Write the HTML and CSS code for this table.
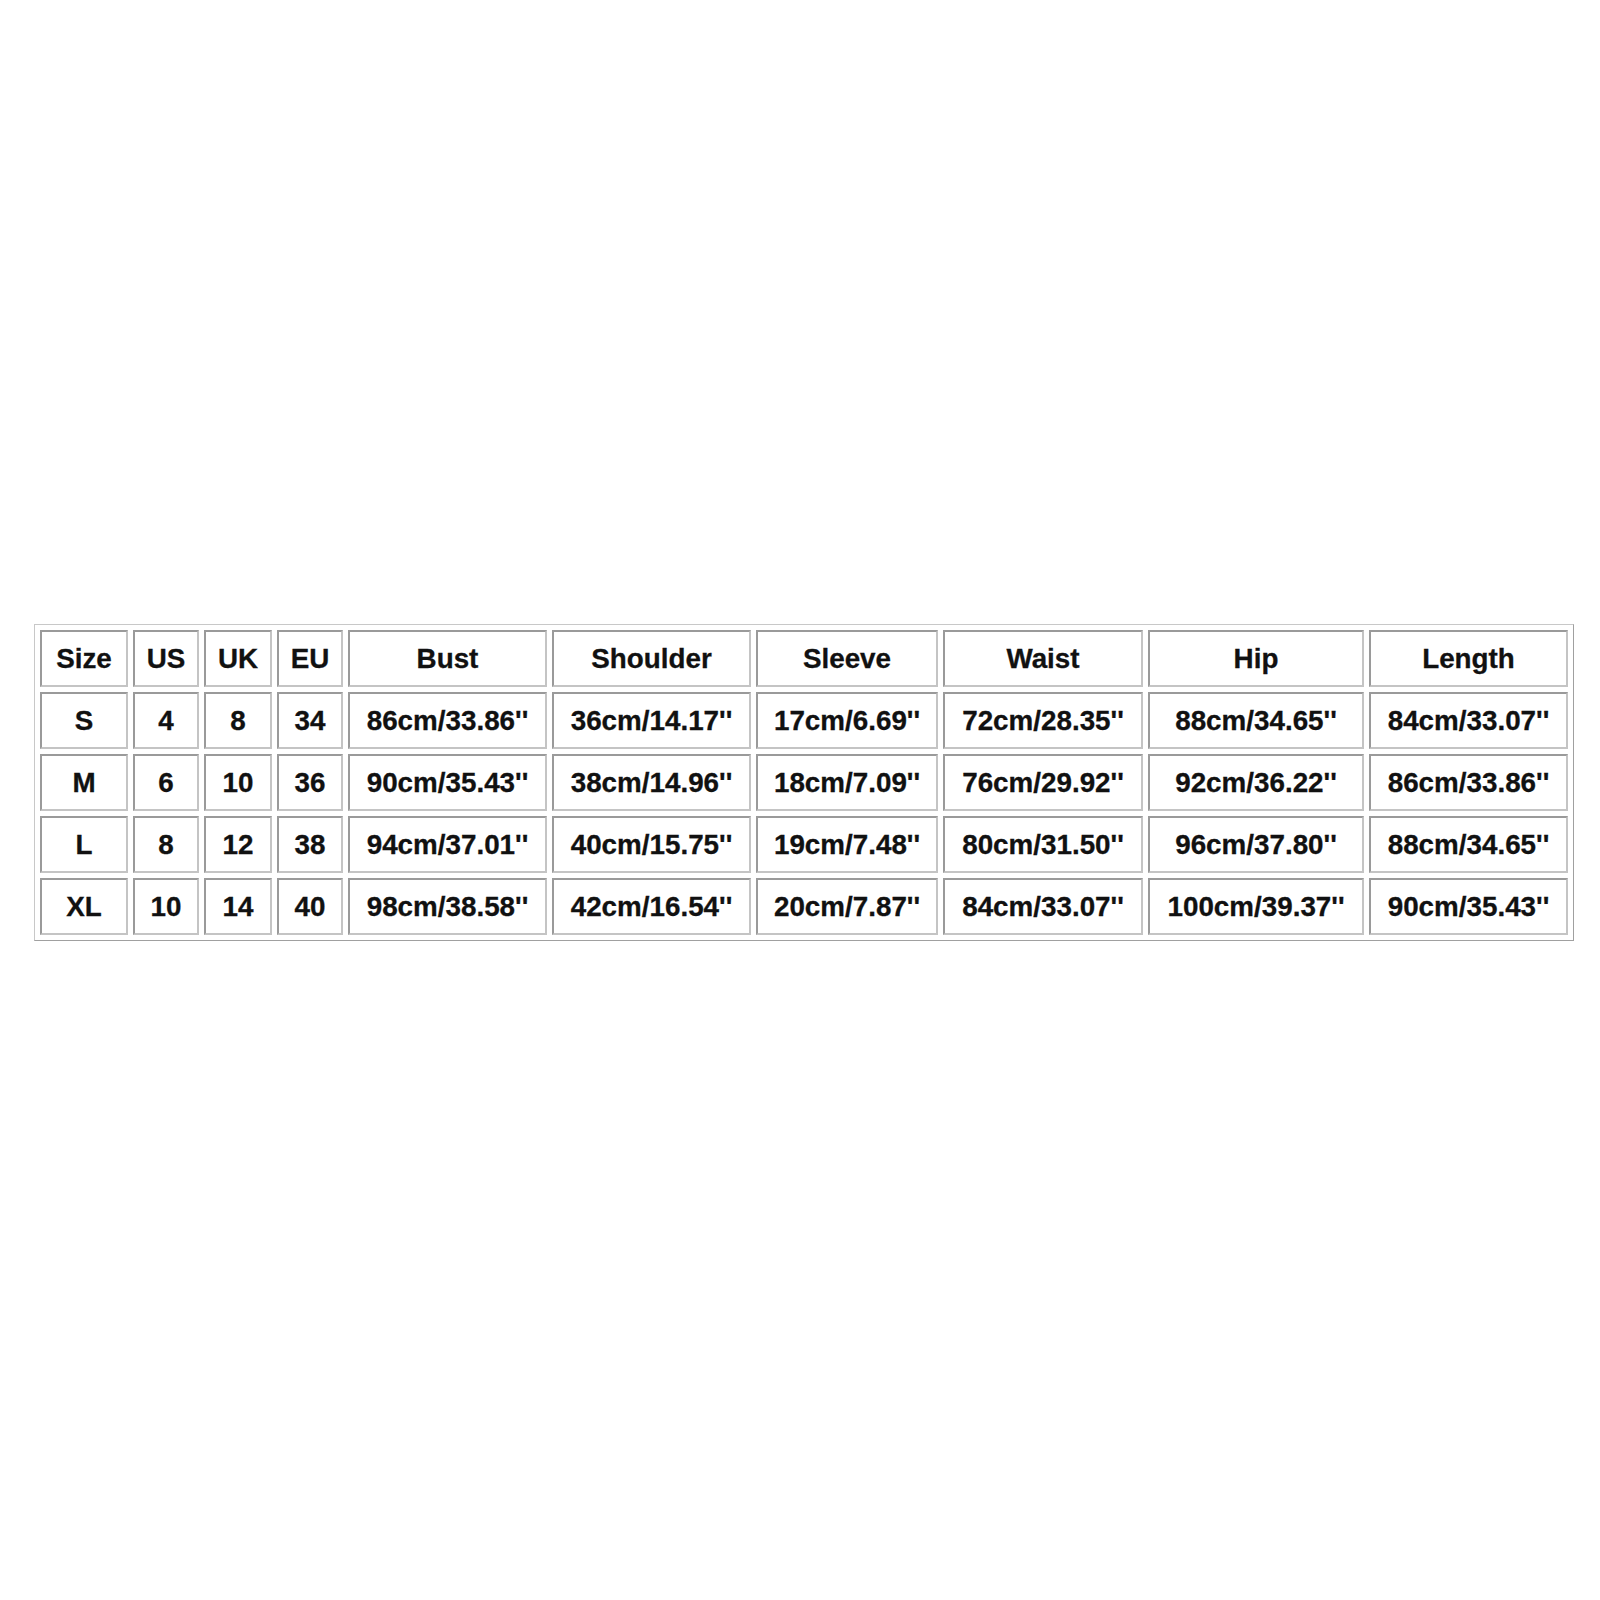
FILE: index.html
```html
<!DOCTYPE html>
<html>
<head>
<meta charset="utf-8">
<link rel="stylesheet" href="styles.css">
</head>
<body>
<div class="page">
<table class="chart">
<colgroup>
<col class="c-size"><col class="c-us"><col class="c-uk"><col class="c-eu"><col class="c-bust"><col class="c-shoulder"><col class="c-sleeve"><col class="c-waist"><col class="c-hip"><col class="c-length">
</colgroup>
<tr><td>Size</td><td>US</td><td>UK</td><td>EU</td><td>Bust</td><td>Shoulder</td><td>Sleeve</td><td>Waist</td><td>Hip</td><td>Length</td></tr>
<tr><td>S</td><td>4</td><td>8</td><td>34</td><td>86cm/33.86''</td><td>36cm/14.17''</td><td>17cm/6.69''</td><td>72cm/28.35''</td><td>88cm/34.65''</td><td>84cm/33.07''</td></tr>
<tr><td>M</td><td>6</td><td>10</td><td>36</td><td>90cm/35.43''</td><td>38cm/14.96''</td><td>18cm/7.09''</td><td>76cm/29.92''</td><td>92cm/36.22''</td><td>86cm/33.86''</td></tr>
<tr><td>L</td><td>8</td><td>12</td><td>38</td><td>94cm/37.01''</td><td>40cm/15.75''</td><td>19cm/7.48''</td><td>80cm/31.50''</td><td>96cm/37.80''</td><td>88cm/34.65''</td></tr>
<tr><td>XL</td><td>10</td><td>14</td><td>40</td><td>98cm/38.58''</td><td>42cm/16.54''</td><td>20cm/7.87''</td><td>84cm/33.07''</td><td>100cm/39.37''</td><td>90cm/35.43''</td></tr>
</table>
</div>
</body>
</html>
```
FILE: styles.css
```css
html, body {
  margin: 0;
  padding: 0;
  background: #ffffff;
}
.page {
  padding: 624px 0 0 34px;
}
.chart {
  table-layout: fixed;
  width: 1540px;
  border-collapse: separate;
  border-spacing: 5px;
  border: 1px solid #c8c8c8;
  border-right-color: #a0a0a0;
  border-bottom-color: #a0a0a0;
  padding: 0;
  margin: 0;
}
.chart td {
  border: 2px solid #a8a8a8;
  border-top-color: #9a9a9a;
  border-left-color: #9a9a9a;
  border-right-color: #c4c4c4;
  border-bottom-color: #c4c4c4;
  height: 52px;
  padding: 1px 0 0 0;
  text-align: center;
  vertical-align: middle;
  font-family: "Liberation Sans", Arial, sans-serif;
  font-weight: bold;
  font-size: 27.8px;
  color: #111111;
  white-space: nowrap;
  -webkit-text-stroke: 0.3px #111111;
}
.c-size { width: 88px; }
.c-us { width: 66px; }
.c-uk { width: 68px; }
.c-eu { width: 66px; }
.c-bust { width: 199px; }
.c-shoulder { width: 199px; }
.c-sleeve { width: 182px; }
.c-waist { width: 200px; }
.c-hip { width: 216px; }
.c-length { width: 199px; }
```
